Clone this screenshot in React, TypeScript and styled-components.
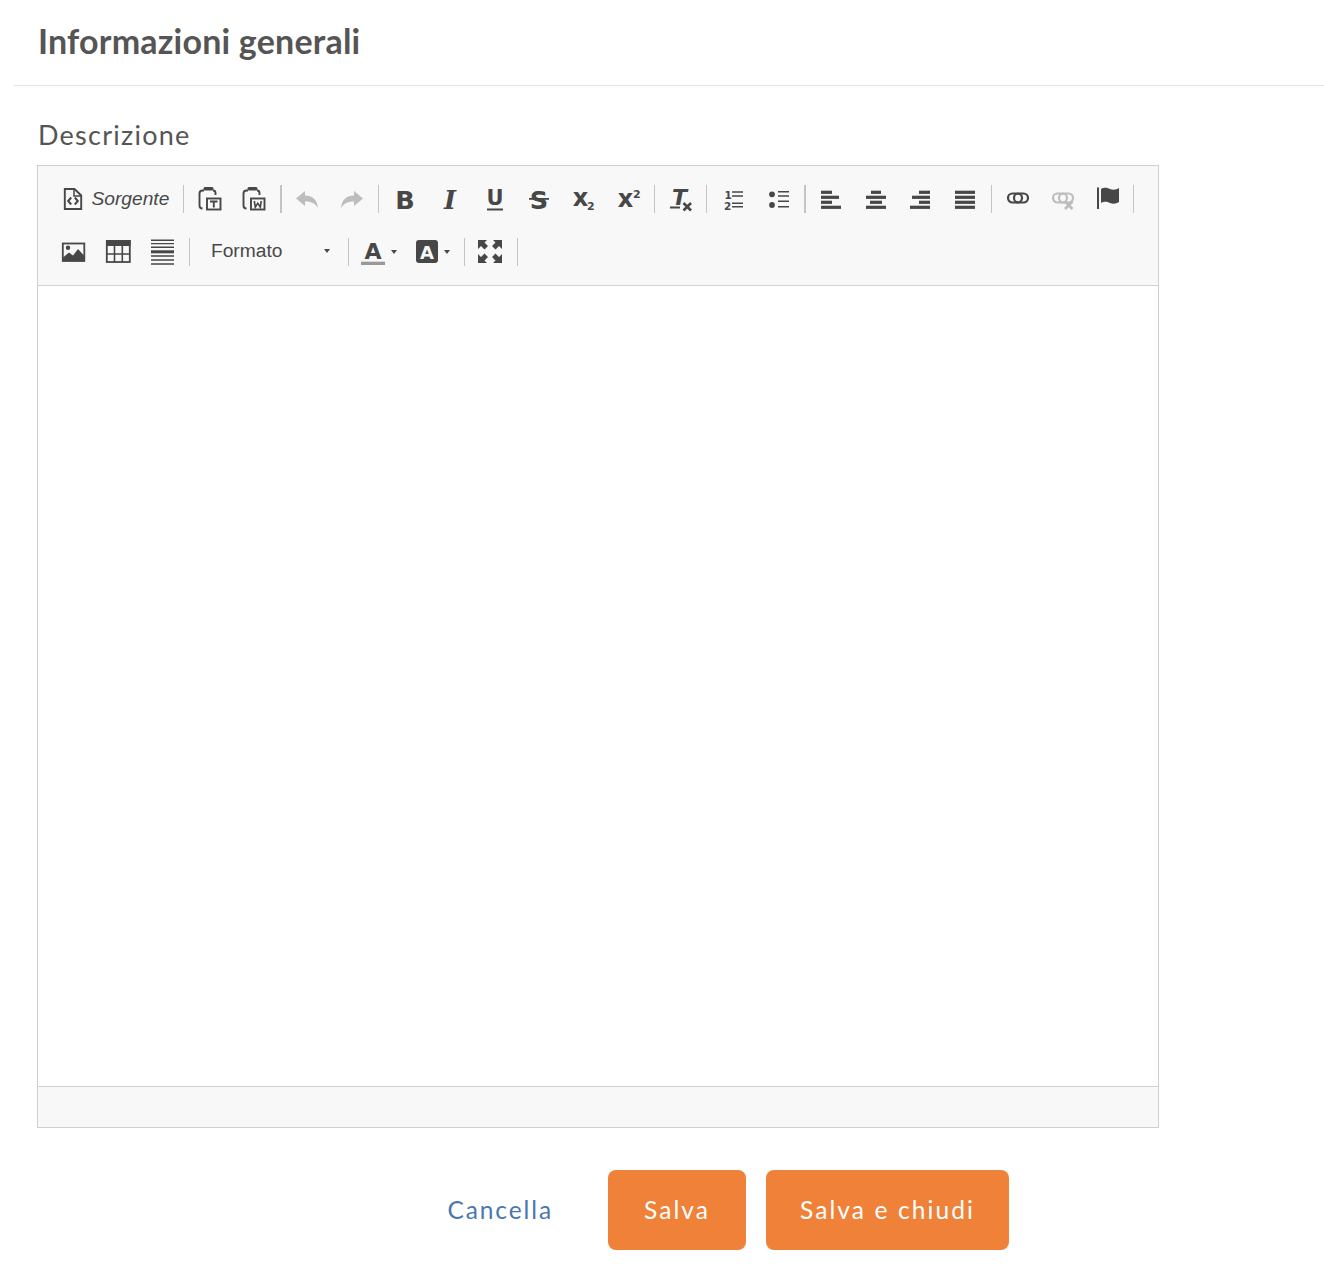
import React from 'react';
import styled, { createGlobalStyle } from 'styled-components';

const GlobalStyle = createGlobalStyle`
  html, body {
    margin: 0;
    padding: 0;
    background: #ffffff;
    font-family: 'Lato', 'Liberation Sans', sans-serif;
  }
`;

const Page = styled.div`
  width: 1324px;
  height: 1278px;
  overflow: hidden;
`;

const Header = styled.header`
  box-sizing: border-box;
  height: 86px;
  margin-left: 14px;
  padding: 0 0 4px 24px;
  display: flex;
  align-items: center;
  border-bottom: 1px solid #e4e4e4;
`;

const Title = styled.h1`
  margin: 0;
  font-size: 34px;
  font-weight: 700;
  letter-spacing: 0.2px;
  color: #555555;
`;

const Body = styled.div`
  padding: 31px 0 0 37px;
`;

const Label = styled.div`
  height: 48px;
  margin-left: 1px;
  font-size: 27px;
  line-height: 35px;
  letter-spacing: 1.25px;
  color: #555555;
`;

const Editor = styled.div`
  width: 1120px;
  border: 1px solid #cfcfcf;
`;

const Toolbar = styled.div`
  height: 106px;
  padding: 6px 0 7px 10px;
  background: #f8f8f8;
  border-bottom: 1px solid #d1d1d1;
`;

const Row = styled.div`
  height: 53px;
  display: flex;
  align-items: center;
`;

const Group = styled.div<{ $pad?: number }>`
  display: flex;
  align-items: center;
  padding: 0 ${({ $pad }) => $pad ?? 3.5}px;
`;

const Separator = styled.span<{ $wide?: boolean }>`
  flex: none;
  width: ${({ $wide }) => ($wide ? '2px' : '1px')};
  height: 28px;
  margin-right: ${({ $wide }) => ($wide ? '-1px' : '0')};
  background: #c4c4c4;
`;

const ToolButton = styled.span`
  flex: none;
  width: 44.67px;
  height: 28px;
  display: flex;
  align-items: center;
  justify-content: center;
`;

const SourceButton = styled.span`
  flex: none;
  width: 128px;
  padding-left: 8px;
  box-sizing: border-box;
  display: flex;
  align-items: center;
  gap: 6px;
`;

const SourceLabel = styled.span`
  font-family: 'Liberation Sans', Arial, sans-serif;
  font-size: 19.2px;
  font-style: italic;
  color: #484848;
`;

const Combo = styled.span`
  flex: none;
  width: 158px;
  box-sizing: border-box;
  padding: 0 18px 2px 21px;
  display: flex;
  align-items: center;
  justify-content: space-between;
  font-family: 'Liberation Sans', Arial, sans-serif;
  font-size: 19.2px;
  color: #484848;
`;

const ColorGroup = styled.span`
  flex: none;
  width: 115.5px;
  box-sizing: border-box;
  padding-left: 11px;
  display: flex;
  align-items: center;
`;

const ColorArrow = styled.span<{ $last?: boolean }>`
  margin: 0 ${({ $last }) => ($last ? '0' : '16px')} 0 5px;
  display: flex;
`;

const Arrow = styled.i`
  display: block;
  width: 0;
  height: 0;
  border-left: 3.5px solid transparent;
  border-right: 3.5px solid transparent;
  border-top: 4px solid #484848;
`;

const Svg = styled.svg<{ $muted?: boolean }>`
  flex: none;
  display: block;
  width: 26px;
  height: 26px;
  overflow: visible;
  color: ${({ $muted }) => ($muted ? '#bdbdbd' : '#474747')};
`;

const SvgLabel = styled.text<{ $serif?: boolean }>`
  font-family: ${({ $serif }) => ($serif ? "'DejaVu Serif'" : "'DejaVu Sans'")}, sans-serif;
  font-weight: 700;
  fill: currentColor;
`;

const Content = styled.div`
  height: 800px;
  background: #ffffff;
`;

const StatusBar = styled.div`
  height: 40px;
  background: #f8f8f8;
  border-top: 1px solid #d1d1d1;
`;

const Footer = styled.div`
  width: 972px;
  margin-top: 42px;
  display: flex;
  justify-content: flex-end;
  align-items: center;
  gap: 20px;
`;

const TextAction = styled.span`
  margin: 0 35px 2px 0;
  font-size: 24.5px;
  letter-spacing: 1.9px;
  color: #4a78ae;
`;

const Primary = styled.button<{ $width: number }>`
  width: ${({ $width }) => $width}px;
  height: 80px;
  padding: 0 0 2px;
  border: none;
  border-radius: 8px;
  background: #ef8238;
  color: #ffffff;
  font-family: inherit;
  font-size: 24.5px;
  letter-spacing: 2.1px;
`;

type IconProps = { muted?: boolean; children: React.ReactNode };

const Icon = ({ muted, children }: IconProps) => (
  <Svg $muted={muted} viewBox="0 0 26 26" fill="currentColor">
    {children}
  </Svg>
);

const Tool = (props: IconProps) => (
  <ToolButton>
    <Icon {...props} />
  </ToolButton>
);

const clipboard = (
  <>
    <path d="M7 4.5H5.5C3.5 4.5 2.5 5.5 2.5 7.5v12C2.5 21.5 3.5 22.5 5.5 22.5" fill="none" stroke="currentColor" strokeWidth="1.9" />
    <path d="M18.5 9V7C18.5 5.5 18 4.5 16 4.5" fill="none" stroke="currentColor" strokeWidth="1.9" />
    <rect x="6.5" y="1" width="10" height="3.5" rx="1.5" />
    <rect x="10" y="12.5" width="13.5" height="11" fill="none" stroke="currentColor" strokeWidth="1.9" />
  </>
);

const bars = (rows: [number, number][]) =>
  rows.map(([x, w], i) => <rect key={i} x={x} y={4.7 + i * 5} width={w} height={3.2} />);

const linkShape = (
  <>
    <rect x="3" y="7.5" width="14" height="9" rx="4.5" fill="none" stroke="currentColor" strokeWidth="2.2" />
    <rect x="9" y="7.5" width="14" height="9" rx="4.5" fill="none" stroke="currentColor" strokeWidth="2.2" />
  </>
);

const App: React.FC = () => (
  <Page>
    <GlobalStyle />
    <Header>
      <Title>Informazioni generali</Title>
    </Header>
    <Body>
      <Label>Descrizione</Label>
      <Editor>
        <Toolbar>
          <Row>
            <Group>
              <SourceButton>
                <Icon>
                  <path d="M4.8 3h9.7l6.7 6.5V23H4.8z" fill="none" stroke="currentColor" strokeWidth="1.9" />
                  <path d="M14 3v7h7" fill="none" stroke="currentColor" strokeWidth="1.5" />
                  <path d="M11.2 11.5l-3 3.5 3 3.5M14.8 11.5l3 3.5-3 3.5" fill="none" stroke="currentColor" strokeWidth="2" />
                </Icon>
                <SourceLabel>Sorgente</SourceLabel>
              </SourceButton>
            </Group>
            <Separator />
            <Group>
              <Tool>
                {clipboard}
                <path d="M13 15.5h7.5M16.8 15.5v6" fill="none" stroke="currentColor" strokeWidth="1.9" />
              </Tool>
              <Tool>
                {clipboard}
                <path d="M13.3 15l1 6.2 2.5-4 2.5 4 1-6.2" fill="none" stroke="currentColor" strokeWidth="1.6" />
              </Tool>
            </Group>
            <Separator $wide />
            <Group>
              <Tool muted>
                <path d="M2 12.5L11 5v4.5c7 0 12 3.5 13 12.5-3-5-7-6.5-13-6.5V20z" />
              </Tool>
              <Tool muted>
                <path d="M24 12.5L15 5v4.5C8 9.5 3 13 2 22c3-5 7-6.5 13-6.5V20z" />
              </Tool>
            </Group>
            <Separator />
            <Group>
              <Tool>
                <SvgLabel x="14" y="22.7" fontSize="25.6" textAnchor="middle">B</SvgLabel>
              </Tool>
              <Tool>
                <SvgLabel $serif x="14" y="22.5" fontSize="25.6" fontStyle="italic" textAnchor="middle">I</SvgLabel>
              </Tool>
              <Tool>
                <SvgLabel x="14" y="19.2" fontSize="21" textAnchor="middle">U</SvgLabel>
                <rect x="6" y="22.5" width="16" height="2" />
              </Tool>
              <Tool>
                <SvgLabel x="14" y="22.5" fontSize="25.6" textAnchor="middle">S</SvgLabel>
                <rect x="4" y="12" width="20" height="1.8" />
              </Tool>
              <Tool>
                <SvgLabel x="10.5" y="20" fontSize="24" textAnchor="middle">x</SvgLabel>
                <SvgLabel x="17" y="24" fontSize="11">2</SvgLabel>
              </Tool>
              <Tool>
                <SvgLabel x="10.5" y="21" fontSize="24" textAnchor="middle">x</SvgLabel>
                <SvgLabel x="18" y="12" fontSize="11">2</SvgLabel>
              </Tool>
            </Group>
            <Separator />
            <Group>
              <Tool>
                <SvgLabel x="12.5" y="19" fontSize="22" fontStyle="italic" textAnchor="middle">T</SvgLabel>
                <rect x="3" y="20.5" width="10" height="2" />
                <path d="M16.5 17l7.500 7.500M24 17l-7.500 7.500" fill="none" stroke="currentColor" strokeWidth="2.6" />
              </Tool>
            </Group>
            <Separator />
            <Group>
              <Tool>
                <SvgLabel x="4.5" y="12.5" fontSize="10.5">1</SvgLabel>
                <SvgLabel x="4" y="24" fontSize="10.5">2</SvgLabel>
                <path d="M12 6h11M12 10h11M12 17.3h11M12 20.7h11" fill="none" stroke="currentColor" strokeWidth="1.6" />
              </Tool>
              <Tool>
                <circle cx="7" cy="8.3" r="2.9" />
                <circle cx="7" cy="19" r="2.9" />
                <path d="M13 5.7h11M13 10h11M13 15.3h11M13 20.7h11" fill="none" stroke="currentColor" strokeWidth="1.6" />
              </Tool>
            </Group>
            <Separator $wide />
            <Group $pad={4}>
              <Tool>{bars([[3, 11], [3, 18], [3, 11], [3, 20]])}</Tool>
              <Tool>{bars([[8, 10], [3, 20], [7, 12], [3, 20]])}</Tool>
              <Tool>{bars([[12, 11], [5, 18], [12, 11], [3, 20]])}</Tool>
              <Tool>{bars([[3, 20], [3, 20], [3, 20], [3, 20]])}</Tool>
            </Group>
            <Separator />
            <Group>
              <Tool>{linkShape}</Tool>
              <Tool muted>
                {linkShape}
                <path d="M15 15.5l7.5 7.5M22.5 15.5L15 23" fill="none" stroke="currentColor" strokeWidth="2.6" />
              </Tool>
              <Tool>
                <rect x="3" y="1.5" width="2" height="21.5" />
                <path d="M7 3c4-2 6-1 9 0s6 1 9-1v14c-3 2-6 2-9 1s-5-2-9 0z" />
              </Tool>
            </Group>
            <Separator />
          </Row>
          <Row>
            <Group>
              <Tool>
                <rect x="1.8" y="4.5" width="21.5" height="17.5" fill="none" stroke="currentColor" strokeWidth="1.8" />
                <circle cx="7" cy="8.7" r="2.2" />
                <path d="M2 22v-3.5l6-5 4 3 5-6.5 6 6.5v5.5z" />
              </Tool>
              <Tool>
                <rect x="1.8" y="2" width="23" height="21" fill="none" stroke="currentColor" strokeWidth="1.8" />
                <rect x="1" y="1" width="24.6" height="6" />
                <path d="M9.5 7v16M17.3 7v16M2 15h23" fill="none" stroke="currentColor" strokeWidth="1.6" />
              </Tool>
              <Tool>
                <path d="M1 1.3h23M1 4.6h23M1 8.3h23M1 17h23M1 21h23M1 25h23" fill="none" stroke="currentColor" strokeWidth="1.4" />
                <rect x="1" y="11.3" width="23" height="3" />
              </Tool>
            </Group>
            <Separator />
            <Combo>
              Formato
              <Arrow />
            </Combo>
            <Separator />
            <ColorGroup>
              <Icon>
                <SvgLabel x="13" y="20" fontSize="22" textAnchor="middle">A</SvgLabel>
                <rect x="1" y="22.7" width="24" height="3.3" fill="#999999" />
              </Icon>
              <ColorArrow>
                <Arrow />
              </ColorArrow>
              <Icon>
                <rect x="3" y="1" width="22" height="23" rx="3" />
                <SvgLabel x="14" y="19.5" fontSize="18" textAnchor="middle" style={{ fill: '#f8f8f8' }}>A</SvgLabel>
              </Icon>
              <ColorArrow $last>
                <Arrow />
              </ColorArrow>
            </ColorGroup>
            <Separator />
            <Group>
              <Tool>
                <path d="M0 1h9L6.500 3.500 10 7l-3.500 3.500L3 7l-3 3zM24 1h-9l2.500 2.500L14 7l3.500 3.500L21 7l3 3zM0 24h9l-2.500-2.500L10 18l-3.500-3.500L3 18l-3-3zM24 24h-9l2.500-2.500L14 18l3.500-3.500L21 18l3-3z" />
              </Tool>
            </Group>
            <Separator />
          </Row>
        </Toolbar>
        <Content />
        <StatusBar />
      </Editor>
      <Footer>
        <TextAction>Cancella</TextAction>
        <Primary $width={138}>Salva</Primary>
        <Primary $width={243}>Salva e chiudi</Primary>
      </Footer>
    </Body>
  </Page>
);

export default App;
